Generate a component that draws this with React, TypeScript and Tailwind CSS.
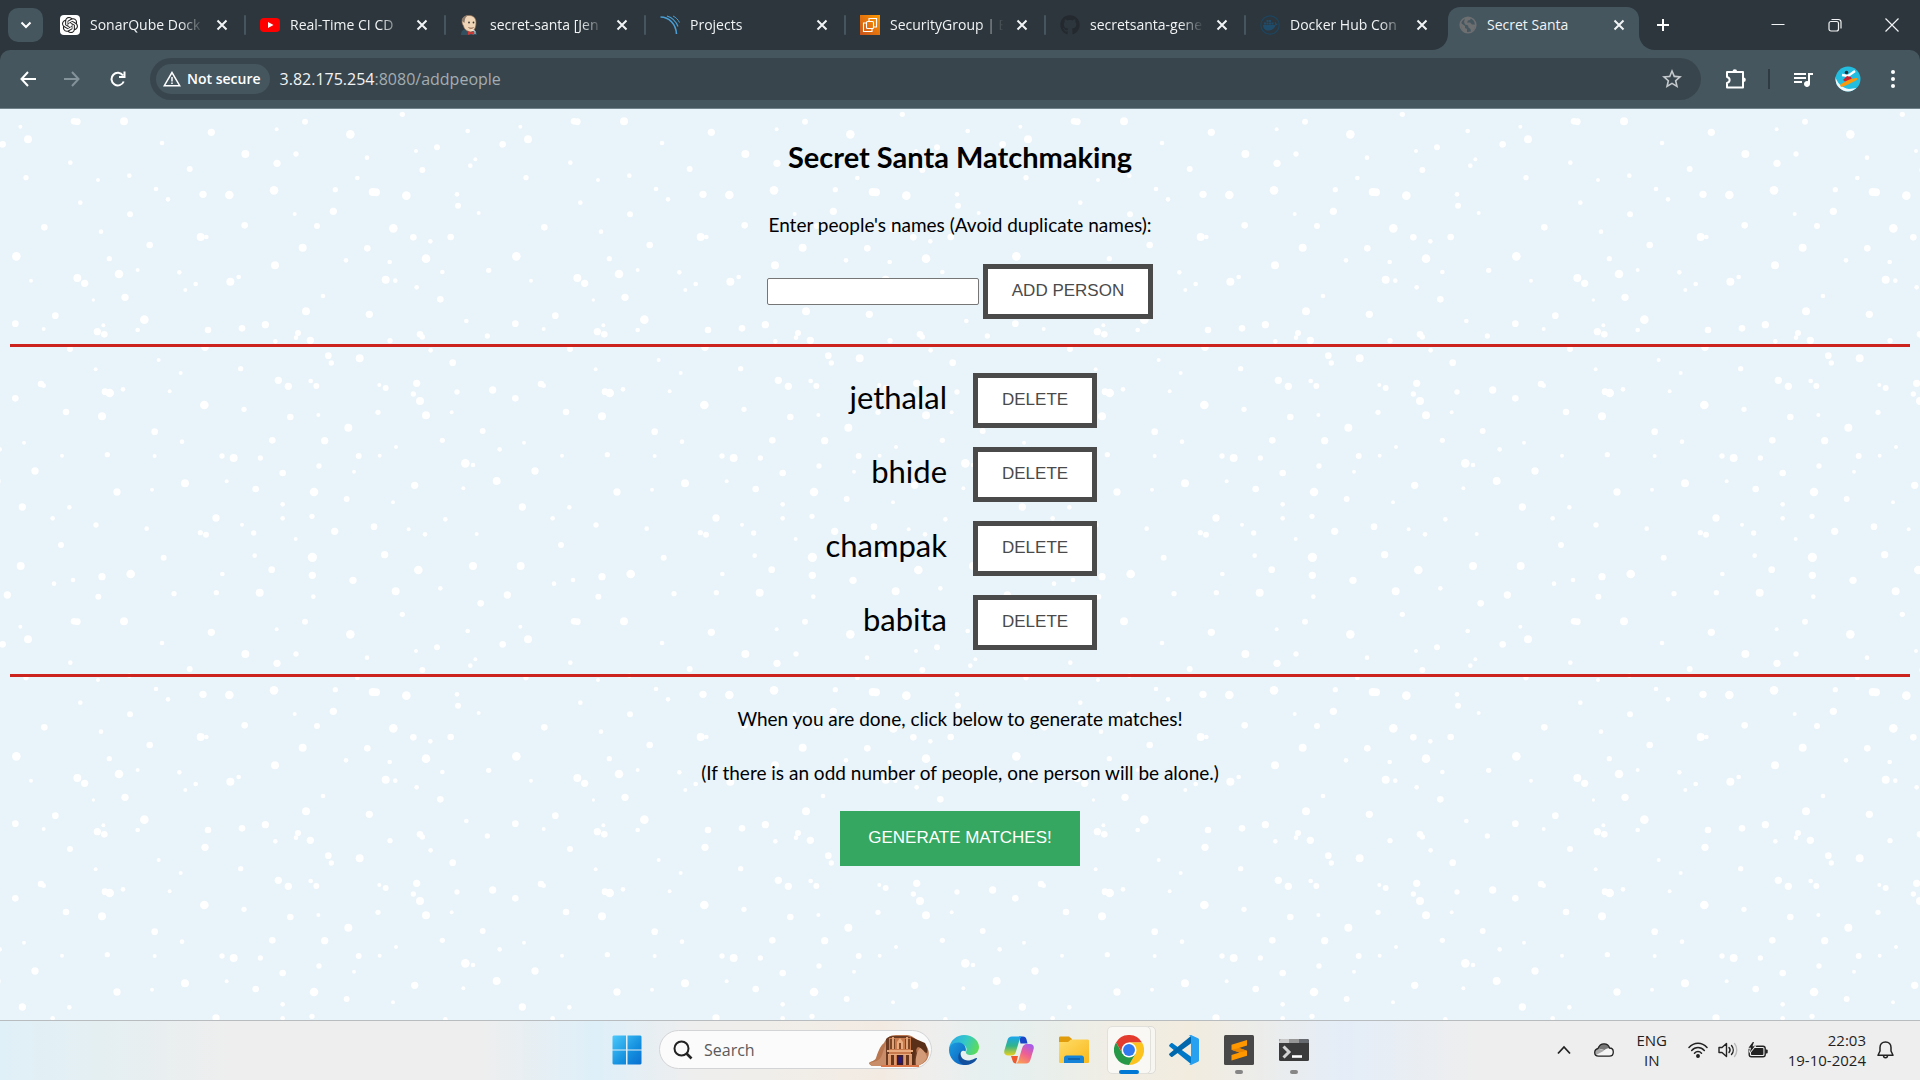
import React from "react";
import { SiOpenai } from "react-icons/si";
import { FaGithub } from "react-icons/fa";
import { MdQueueMusic, MdStarBorder } from "react-icons/md";

/* ---------- snow background ---------- */

// x, y, radius inside a 1500 x 1500 tile
const FLAKES: number[][] = [
  [222, 64, 10], [232, 65, 10], [372, 64, 12], [61, 80, 6], [84, 118, 12], [8, 133, 10], [1508, 133, 10],
  [211, 188, 7], [78, 233, 8], [294, 240, 6], [388, 227, 7], [486, 129, 7], [634, 97, 11], [569, 207, 9],
  [468, 267, 7], [504, 298, 7], [241, 308, 7], [390, 343, 9], [609, 283, 11], [688, 285, 13], [736, 162, 12],
  [831, 190, 11], [822, 271, 13], [888, 162, 8], [830, 88, 6], [915, 65, 9], [1051, 103, 13], [1207, 43, 8],
  [1403, 93, 7], [1248, 153, 6], [1311, 142, 9], [1101, 173, 7], [1426, 178, 6], [1411, 197, 7], [1267, 210, 9],
  [1072, 234, 7], [1006, 269, 8], [1118, 276, 12], [1128, 277, 12], [1219, 287, 13], [1371, 283, 7],
  [1374, 317, 9], [1436, 339, 6], [1000, 334, 11], [884, 342, 6], [951, 378, 9], [734, 376, 10], [1180, 385, 13],
  [1240, 412, 10], [1352, 411, 10], [1291, 424, 7], [133, 382, 10], [303, 395, 7], [602, 411, 12], [619, 411, 7],
  [449, 435, 10], [49, 469, 13], [328, 476, 8], [357, 522, 13], [413, 510, 6], [538, 517, 7], [587, 552, 7],
  [556, 570, 6], [691, 545, 12], [716, 531, 7], [825, 496, 12], [908, 443, 12], [1102, 445, 10], [1038, 481, 7],
  [1169, 486, 7], [1278, 476, 13], [1327, 516, 7], [1466, 511, 8], [1157, 539, 12], [1186, 542, 7],
  [1250, 562, 7], [1321, 598, 10], [93, 542, 6], [232, 534, 12], [254, 550, 11], [375, 592, 11], [280, 600, 5],
  [166, 647, 10], [46, 671, 10], [131, 687, 6], [310, 676, 6], [292, 695, 11], [313, 703, 10], [433, 659, 13],
  [413, 690, 7], [624, 690, 10], [726, 685, 10], [796, 674, 11], [918, 634, 12], [969, 588, 7], [894, 699, 9],
  [888, 713, 7], [931, 721, 11], [826, 724, 7], [1108, 643, 11], [1170, 722, 8], [1260, 703, 10], [1267, 711, 8],
  [1399, 663, 7], [1462, 708, 8], [210, 747, 9], [615, 742, 11], [476, 780, 6], [287, 808, 6], [542, 819, 6],
  [722, 806, 8], [985, 767, 10], [994, 789, 8], [1079, 775, 12], [1292, 751, 7], [1358, 788, 10], [123, 852, 10],
  [131, 857, 7], [46, 895, 10], [315, 875, 10], [329, 879, 13], [369, 868, 7], [509, 874, 6], [835, 841, 11],
  [865, 859, 11], [932, 843, 7], [949, 858, 9], [1138, 855, 6], [1157, 864, 9], [1250, 850, 11], [1240, 882, 8],
  [1260, 903, 12], [1371, 876, 8], [1478, 870, 11], [1278, 946, 12], [1355, 937, 6], [1134, 937, 8],
  [955, 945, 6], [871, 951, 10], [732, 928, 8], [613, 915, 13], [306, 949, 12], [198, 936, 10], [464, 995, 10],
  [546, 1025, 7], [72, 1028, 6], [1045, 983, 12], [817, 1021, 10], [974, 1022, 11], [1188, 1041, 6],
  [1327, 1021, 8], [1448, 993, 9], [-1, 1048, 7], [1499, 1048, 7], [186, 1067, 6], [322, 1064, 8], [464, 1068, 6],
  [666, 1068, 8], [701, 1074, 12], [781, 1074, 8], [848, 1119, 10], [957, 1098, 8], [1076, 1068, 9],
  [1139, 1067, 6], [1062, 1115, 6], [1396, 1090, 13], [1419, 1095, 7], [-10, 1143, 12], [1490, 1143, 12],
  [1390, 1165, 6], [1244, 1156, 11], [105, 1113, 11], [351, 1176, 11], [456, 1169, 6], [555, 1150, 12],
  [680, 1144, 6], [767, 1167, 10], [942, 1176, 13], [1040, 1197, 9], [1179, 1207, 6], [67, 1221, 11],
  [208, 1222, 7], [158, 1255, 7], [288, 1275, 8], [440, 1286, 7], [648, 1254, 11], [601, 1298, 8],
  [618, 1304, 9], [726, 1274, 6], [761, 1299, 8], [848, 1213, 7], [848, 1255, 7], [936, 1249, 8], [887, 1317, 6],
  [1004, 1294, 11], [1122, 1280, 10], [1226, 1288, 6], [1275, 1303, 7], [1336, 1258, 7], [1430, 1302, 6],
  [183, 1335, 9], [62, 1398, 12], [491, 1373, 9], [306, 1430, 11], [392, 1422, 13], [219, 1440, 7],
  [162, 1451, 7], [22, 1485, 11], [1522, 1485, 11], [295, 1490, 9], [522, 1481, 8], [649, 1478, 8], [667, 1422, 7],
  [764, 1367, 7], [815, 1409, 10], [779, 1478, 12], [937, 1372, 14], [937, 1426, 11], [940, 1490, 7],
  [1059, 1441, 11], [1154, 1364, 11], [1255, 1410, 13], [1187, 1474, 12], [1321, 1465, 7], [1419, 1398, 12],
  [1442, 10, 10],
];

function Snow() {
  return (
    <svg className="absolute inset-0 h-full w-full" aria-hidden="true">
      <defs>
        <pattern id="snow" x="0" y="-9" width="500" height="500" patternUnits="userSpaceOnUse" viewBox="0 0 1500 1500">
          {FLAKES.map(([x, y, r], i) => (
            <circle key={i} cx={x} cy={y} r={r} fill="#ffffff" />
          ))}
        </pattern>
      </defs>
      <rect width="100%" height="100%" fill="url(#snow)" />
    </svg>
  );
}

/* ---------- tab strip ---------- */

const JenkinsIcon = () => (
  <svg viewBox="0 0 20 20" className="h-5 w-5">
    <path d="M1 20c0-3 1-5 4-6l7 1c3 0 5 2 5 5z" fill="#335061" />
    <path d="M2 6C2 2 6 0 10 0.500c4 0.500 6 3 6 7 0 4-1 8-5 9.500-4-0.500-7-3-7.500-6C2.500 9.500 2 8 2 6z" fill="#f0d6b7" stroke="#8c6c52" strokeWidth="0.700" />
    <path d="M2 6C2 2 5 0.500 8 0.500 4.500 2.500 5 5 4.500 8z" fill="#8a7a6c" />
    <circle cx="9" cy="7.500" r="0.900" fill="#333" />
    <circle cx="13.500" cy="7.500" r="0.900" fill="#333" />
    <path d="M8.500 12.500c1.500 1 3.500 1 5 0" stroke="#6b3c2a" strokeWidth="0.800" fill="none" />
    <path d="M8 16l3 1.500L14 16v4l-3-1.200L8 20z" fill="#d33833" />
    <path d="M11.500 15l3.500 1v3" fill="none" stroke="#fff" strokeWidth="0.800" />
  </svg>
);

const SonarIcon = () => (
  <svg viewBox="0 0 20 20" className="h-5 w-5" fill="none" stroke="#4b9fd5">
    <path d="M0.500 2C9 2 16 9 16.500 19" strokeWidth="1.600" />
    <path d="M7 1c5 1.500 9 5.500 11 10.500" strokeWidth="1.200" />
    <path d="M13 1c3 1.500 5 3.500 6.500 6.500" strokeWidth="1" />
  </svg>
);

const Ec2Icon = () => (
  <svg viewBox="0 0 20 20" className="h-5 w-5">
    <defs>
      <linearGradient id="ec2" x1="0" y1="1" x2="1" y2="0">
        <stop offset="0" stopColor="#c8511b" />
        <stop offset="1" stopColor="#ff9900" />
      </linearGradient>
    </defs>
    <rect width="20" height="20" fill="url(#ec2)" />
    <g fill="none" stroke="#fff" strokeWidth="1.100">
      <path d="M6 8H3.500v8.500H12V14" />
      <rect x="6.500" y="6.500" width="7" height="7" rx="1" />
      <path d="M9 6V3.500h7.500V12H14" />
    </g>
  </svg>
);

const YoutubeIcon = () => (
  <svg viewBox="0 0 20 20" className="h-5 w-5">
    <rect x="0" y="3" width="20" height="14" rx="4" fill="#ff0000" />
    <path d="M8 7l5.500 3L8 13z" fill="#fff" />
  </svg>
);

const DockerIcon = () => (
  <svg viewBox="0 0 20 20" className="h-5 w-5">
    <circle cx="10" cy="10" r="9.200" fill="none" stroke="#1d4560" strokeWidth="1.200" />
    <path d="M3 10h12c0.500-1 0-2-0.500-2.500l0.800-0.500c0.700 0.500 1 1.200 1 1.800 0.500-0.200 1.200-0.100 1.500 0.200-0.400 1-1.300 1.300-2.300 1.300C14.500 14 12 15.500 8.500 15.500 5 15.500 3 13.500 3 10z" fill="#1f4c6b" />
    <path d="M4 7.500h2v2H4zM6.500 7.500h2v2h-2zM9 7.500h2v2H9zM11.500 7.500h2v2h-2zM6.500 5h2v2h-2zM9 5h2v2H9z" fill="#1f4c6b" />
  </svg>
);

const GlobeIcon = () => (
  <svg viewBox="0 0 18 18" className="h-[18px] w-[18px]">
    <circle cx="9" cy="9" r="7.800" fill="none" stroke="#6d6f71" strokeWidth="1.600" />
    <path d="M2 7l4 3v2l2 1v3.500C4 16 1.500 13 2 7zM6 2c1 0 4-1 6 0l-1 2-2 0.500-1 2h3l2 2h3c0.500 3-1 6-4 7.500l-0.500-3-2-1.500-0.500-2-3-1L5 6z" fill="#6d6f71" />
  </svg>
);

const Cross = () => (
  <svg viewBox="0 0 16 16" className="h-4 w-4" stroke="#f1f3f4" strokeWidth="2">
    <path d="M3.500 3.500l9 9M12.500 3.500l-9 9" />
  </svg>
);

const TABS = [
  { title: "SonarQube Dock", icon: <span className="flex h-5 w-5 items-center justify-center rounded bg-white"><SiOpenai size={16} color="#222" /></span> },
  { title: "Real-Time CI CD", icon: <YoutubeIcon /> },
  { title: "secret-santa [Jen", icon: <JenkinsIcon /> },
  { title: "Projects", icon: <SonarIcon /> },
  { title: "SecurityGroup | E", icon: <Ec2Icon /> },
  { title: "secretsanta-gene", icon: <FaGithub size={20} color="#24292f" /> },
  { title: "Docker Hub Con", icon: <DockerIcon /> },
];

function TabStrip() {
  return (
    <div className="flex h-[50px] bg-[#2c363c] pl-2">
      <button aria-label="Search tabs" className="mt-2 mr-[3px] flex h-[34px] w-[35px] shrink-0 items-center justify-center rounded-[10px] bg-[#45565f]">
        <svg viewBox="0 0 12 12" className="h-3 w-3" fill="none" stroke="#fff" strokeWidth="2">
          <path d="M1.500 3.500L6 8l4.500-4.500" />
        </svg>
      </button>
      {TABS.map((tab, i) => (
        <div key={tab.title} className="flex w-[200px] min-w-0 items-center pl-[14px]">
          <button className="flex min-w-0 flex-1 items-center gap-[10px] text-left">
            <span className="shrink-0">{tab.icon}</span>
            <span className="w-[116px] overflow-hidden text-[14px] leading-5 whitespace-nowrap text-[#f1f3f4] [mask-image:linear-gradient(to_right,black_78%,transparent_98%)]">
              {tab.title}
            </span>
          </button>
          <button aria-label={"Close " + tab.title} className="mr-[14px] shrink-0"><Cross /></button>
          <span className={i < 6 ? "h-5 w-[2px] shrink-0 rounded bg-[#45565f]" : "h-5 w-[2px] shrink-0"} />
        </div>
      ))}
      <div className="relative mt-[7px] ml-[2px] flex w-[191px] min-w-0 items-center rounded-t-[12px] bg-[#45565f] pb-[7px] pl-[11px]">
        <svg viewBox="0 0 16 16" className="absolute bottom-0 -left-4 h-4 w-4" fill="#45565f"><path d="M16 0v16H0C9 16 16 9 16 0z" /></svg>
        <svg viewBox="0 0 16 16" className="absolute -right-4 bottom-0 h-4 w-4" fill="#45565f"><path d="M0 0v16h16C7 16 0 9 0 0z" /></svg>
        <button className="flex min-w-0 flex-1 items-center gap-[10px] text-left">
          <GlobeIcon />
          <span className="text-[14px] leading-5 whitespace-nowrap text-[#f1f3f4]">Secret Santa</span>
        </button>
        <button aria-label="Close Secret Santa" className="mr-3 shrink-0"><Cross /></button>
      </div>
      <button aria-label="New tab" className="ml-4 shrink-0">
        <svg viewBox="0 0 16 16" className="h-4 w-4" stroke="#fff" strokeWidth="2"><path d="M8 2v12M2 8h12" /></svg>
      </button>
      <div className="ml-auto flex shrink-0 text-[#f1f3f4]">
        <button aria-label="Minimise" className="flex w-[57px] items-center justify-center">
          <svg viewBox="0 0 14 14" className="h-[14px] w-[14px]" stroke="currentColor"><path d="M0.500 6.500h13" /></svg>
        </button>
        <button aria-label="Restore" className="flex w-[57px] items-center justify-center">
          <svg viewBox="0 0 14 14" className="h-[14px] w-[14px]" fill="none" stroke="currentColor" strokeWidth="1.200">
            <rect x="1" y="3.500" width="9.500" height="9.500" rx="2" />
            <path d="M3.500 1.500h7a2.500 2.500 0 0 1 2.500 2.500v6.500" />
          </svg>
        </button>
        <button aria-label="Close window" className="flex w-[57px] items-center justify-center">
          <svg viewBox="0 0 14 14" className="h-[14px] w-[14px]" stroke="currentColor" strokeWidth="1.200"><path d="M0.500 0.500l13 13M13.500 0.500l-13 13" /></svg>
        </button>
      </div>
    </div>
  );
}

/* ---------- toolbar ---------- */

function Toolbar() {
  return (
    <div className="bg-[#2c363c]">
      <div className="flex h-[59px] items-center rounded-t-[10px] border-b border-[#71828a] bg-[#45565f] pl-5 text-white">
        <button aria-label="Back" className="mr-7">
          <svg viewBox="0 0 16 16" className="h-4 w-4" fill="none" stroke="#fff" strokeWidth="2"><path d="M8 1L1.500 8 8 15M1.500 8H16" /></svg>
        </button>
        <button aria-label="Forward" className="mr-[30px]">
          <svg viewBox="0 0 16 16" className="h-4 w-4" fill="none" stroke="#849299" strokeWidth="2"><path d="M8 1l6.500 7L8 15M14.500 8H0" /></svg>
        </button>
        <button aria-label="Reload" className="mr-6">
          <svg viewBox="0 0 16 16" className="h-4 w-4" fill="none" stroke="#fff" strokeWidth="2"><path d="M13.700 10.500A6.300 6.300 0 1 1 13 4.500M14.500 0.500V6H9" /></svg>
        </button>
        <div className="flex h-[42px] min-w-0 flex-1 items-center rounded-full bg-[#39454c] px-[6px]">
          <button className="flex h-[30px] shrink-0 items-center gap-[6px] rounded-full bg-[#45565f] px-[7px]">
            <svg viewBox="0 0 18 16" className="h-4 w-[18px]" fill="none" stroke="#fff" strokeWidth="1.500">
              <path d="M9 1.500L1.300 14.700h15.400z" />
              <path d="M9 6v4.500M9 11.500v1.500" />
            </svg>
            <span className="pr-[2px] text-[14px] leading-5 font-semibold">Not secure</span>
          </button>
          <div className="relative ml-[10px] min-w-0 flex-1 text-[16px] leading-6">
            <input aria-label="Address" className="absolute inset-0 w-full bg-transparent outline-none" />
            <span className="text-[#f1f3f4]">3.82.175.254</span>
            <span className="text-[#a3adb2]">:8080/addpeople</span>
          </div>
          <button aria-label="Bookmark" className="mr-[11px] shrink-0"><MdStarBorder size={24} color="#c3c9cc" /></button>
        </div>
        <button aria-label="Extensions" className="ml-6 shrink-0">
          <svg viewBox="0 0 22 22" className="h-[22px] w-[22px]" fill="none" stroke="#fff" strokeWidth="2">
            <path d="M2 4h16v15.500H2v-4.500c3.500-1 3.500-5 0-6z" strokeLinejoin="round" />
            <path d="M7.500 3.500a2.300 2.300 0 0 1 4.600 0zM18.500 9.500a2.300 2.300 0 0 1 0 4.600z" fill="#fff" stroke="none" />
          </svg>
        </button>
        <span className="ml-[21px] h-5 w-[2px] shrink-0 bg-[#2f3b41]" />
        <button aria-label="Media" className="ml-[21px] shrink-0"><MdQueueMusic size={24} color="#fff" /></button>
        <button aria-label="Profile" className="ml-5 shrink-0">
          <svg viewBox="0 0 26 26" className="h-[26px] w-[26px]">
            <defs><clipPath id="avatar"><circle cx="13" cy="13" r="12.500" /></clipPath></defs>
            <g clipPath="url(#avatar)">
              <rect width="26" height="26" fill="#23bde0" />
              <path d="M0 10c2 7 7 12 14 13l8-1-6 4H0z" fill="#eef6f8" />
              <path d="M7 9l6 1 7-5" stroke="#fff" strokeWidth="2.400" fill="none" />
              <path d="M8 14l4-4 4 1 1 3-5 3z" fill="#c8202f" />
              <path d="M5 19c4-3 10-7 17-7 1 1 0 2-2 3-5 2-9 5-14 6z" fill="#f89a0c" />
              <circle cx="11.500" cy="6.500" r="1.800" fill="#263238" />
            </g>
          </svg>
        </button>
        <button aria-label="Menu" className="mr-[17px] ml-[22px] shrink-0">
          <svg viewBox="0 0 20 20" className="h-5 w-5" fill="#fff">
            <circle cx="10" cy="3" r="2" /><circle cx="10" cy="10" r="2" /><circle cx="10" cy="17" r="2" />
          </svg>
        </button>
      </div>
    </div>
  );
}

/* ---------- page ---------- */

const PEOPLE = ["jethalal", "bhide", "champak", "babita"];

function Page() {
  const outlined = "h-[55px] border-[5px] border-[#4a4a4a] bg-white px-6 pb-[2px] font-['Liberation_Sans',sans-serif] text-[17px] leading-5 text-[#4a4a4a]";
  return (
    <main className="relative flex-1 bg-[#e8f3fa] px-[10px] font-['Lato',sans-serif] text-black">
      <Snow />
      <div className="relative text-center">
        <h1 className="pt-[30px] text-[29px] leading-9 font-bold">Secret Santa Matchmaking</h1>
        <p className="mt-[36px] text-[19px] leading-7"><label htmlFor="person">Enter people's names (Avoid duplicate names):</label></p>
        <div className="mt-[25px] flex items-center justify-center gap-1">
          <input id="person" type="text" className="h-[27px] w-[212px] rounded-[2px] border border-[#767676] bg-white px-1" />
          <button className={outlined}>ADD PERSON</button>
        </div>
        <hr className="mt-[25px] border-t-[3px] border-[#cc231e]" />
        <ul className="mt-[26px] flex flex-col gap-[19px]">
          {PEOPLE.map((name) => (
            <li key={name} className="grid grid-cols-2 items-center gap-[26px]">
              <span className="pb-[7px] text-right text-[31px] leading-9">{name}</span>
              <button className={outlined + " justify-self-start"}>DELETE</button>
            </li>
          ))}
        </ul>
        <hr className="mt-6 border-t-[3px] border-[#cc231e]" />
        <p className="mt-[28px] text-[19px] leading-7">When you are done, click below to generate matches!</p>
        <p className="mt-[26px] text-[19px] leading-7">(If there is an odd number of people, one person will be alone.)</p>
        <button className="mt-[24px] mb-5 h-[55px] bg-[#35a760] px-7 pb-[2px] font-['Liberation_Sans',sans-serif] text-[17px] leading-5 text-white">
          GENERATE MATCHES!
        </button>
      </div>
    </main>
  );
}

/* ---------- taskbar ---------- */

const WindowsIcon = () => (
  <svg viewBox="0 0 30 30" className="h-[30px] w-[30px]">
    <defs>
      <linearGradient id="win" x1="0" y1="0" x2="1" y2="1">
        <stop offset="0" stopColor="#4cc9fb" /><stop offset="0.600" stopColor="#1490df" /><stop offset="1" stopColor="#0a6fd0" />
      </linearGradient>
    </defs>
    <path d="M1.500 0.500H14v14H0.500v-13zM15.500 0.500h13l1 1v13h-14zM0.500 15.500H14v14H1.500l-1-1zM15.500 15.500h14v13l-1 1h-13z" fill="url(#win)" />
  </svg>
);

const PetraIcon = () => (
  <svg viewBox="0 0 60 34" className="h-[34px] w-[60px]">
    <path d="M0 30c2-2 6-2 7-5 2-6 4-12 8-15 2-5 6-8 12-8h11c5 0 9 4 12 7l8 5c3 5 2 10-1 14-4 4-8 5-13 5H3c-2-1-3-2-3-3z" fill="#b87750" />
    <path d="M17 6c2-2 4-3 7-3h14c4 1 7 4 8 7l4 22H17z" fill="#6a3a22" />
    <path d="M20 5h22v28H20z" fill="#c97a4c" />
    <path d="M42 4l14 6c2 4 3 7 2 10-4-1-6-6-9-6-3 2-3 9-4 18h-3z" fill="#5b3018" />
    <path d="M0 30c5-1 11-2 13-8l4-12v23H3z" fill="#c98e69" />
    <path d="M47 33c-1-6 0-13 4-18 3 1 6 6 7 9-2 5-6 8-11 9z" fill="#d49b78" />
    <path d="M21 6h5v10h-5zM36 6h5v10h-5z" fill="#7c4526" />
    <path d="M23 4h2v12h-2zM37 4h2v12h-2z" fill="#e0a277" />
    <path d="M31 5l3 4v7h-6V9z" fill="#e8ac80" /><path d="M30 10h2v6h-2z" fill="#8a4a28" />
    <path d="M18 17h26v2H18zM19 21h24v1H19z" fill="#e8ac80" />
    <path d="M19 22h3v10h-3zM25 22h2v10h-2zM35 22h2v10h-2zM40 22h3v10h-3z" fill="#dd9a6e" />
    <path d="M22 22h3v10h-3zM37 22h3v10h-3z" fill="#6b381e" />
    <path d="M28 22h6v10h-6z" fill="#3b1b30" /><path d="M29.500 24h3v6h-3z" fill="#27187a" />
    <path d="M12 32h38v2H12z" fill="#d9774a" />
  </svg>
);

const EdgeIcon = () => (
  <svg viewBox="0 0 30 30" className="h-[30px] w-[30px]">
    <defs>
      <linearGradient id="edgeTop" x1="0" y1="0.300" x2="1" y2="0.600">
        <stop offset="0" stopColor="#2aa9e8" /><stop offset="0.500" stopColor="#34c8c8" /><stop offset="1" stopColor="#5fdc55" />
      </linearGradient>
      <linearGradient id="edgeLow" x1="0" y1="0" x2="1" y2="1">
        <stop offset="0" stopColor="#1b9de0" /><stop offset="1" stopColor="#0b5cbd" />
      </linearGradient>
    </defs>
    <path d="M0 14C1 5 8 0 15 0c9 0 15 6 15 12 0 5-4 8-8 8-4 0-5.500-1.500-5-3 2-4-1-8-6-8-5 0-9 2-11 5z" fill="url(#edgeTop)" />
    <path d="M0 15C0 10 5 7 10 7.500c5 0.500 8 5 6.500 9C13 14 9 19 11 24c1 3 4 5 7 5.500C7 32 0 23 0 15z" fill="url(#edgeLow)" />
    <path d="M12 16c-2 7 4 11 10 9 3-1 5-2.500 6-2 0.500 1-4 7-11 7C11 30 6 22 12 16z" fill="#124f9c" />
  </svg>
);

const CopilotIcon = () => (
  <svg viewBox="0 0 30 28" className="h-7 w-[30px]">
    <defs>
      <linearGradient id="copA" x1="0" y1="0" x2="0" y2="1">
        <stop offset="0" stopColor="#1aa5ee" /><stop offset="0.500" stopColor="#31b48a" /><stop offset="1" stopColor="#ead11c" />
      </linearGradient>
      <linearGradient id="copB" x1="0.800" y1="0" x2="0.300" y2="1">
        <stop offset="0" stopColor="#a25cf0" /><stop offset="0.500" stopColor="#ee5f94" /><stop offset="1" stopColor="#fb9a55" />
      </linearGradient>
    </defs>
    <path d="M15 0.500h4c2 0 3 1 3.500 3l1 4h-7z" fill="#1746c8" />
    <path d="M7 20h7l-2 7.500c-2 0-3-1-3.500-3z" fill="#f0592b" />
    <path d="M8 0.500h10c-2 1-2.500 3-3 5l-3 10c-1 3-2 4-5 4H4c-3 0-4.500-2-3.500-5.500l3-10C4 2 5.500 0.500 8 0.500z" fill="url(#copA)" />
    <path d="M22 27.500H12c2-1 2.500-3 3-5l3-10c1-3 2-4.500 5-4.500h3c3 0 4.500 2 3.500 5.500l-3 10c-0.700 2.500-2 4-4.500 4z" fill="url(#copB)" />
  </svg>
);

const FolderIcon = () => (
  <svg viewBox="0 0 30 28" className="h-7 w-[30px]">
    <defs>
      <linearGradient id="fold" x1="0" y1="0" x2="1" y2="1">
        <stop offset="0" stopColor="#ffdc68" /><stop offset="1" stopColor="#f9b91c" />
      </linearGradient>
    </defs>
    <path d="M0 2c0-1 0.600-1.500 1.500-1.500H10L13 3v4H0z" fill="#e09c0b" />
    <path d="M0 6h9l3-2.500h16.500c1 0 1.500 0.500 1.500 1.500v20.500c0 1-0.500 1.500-1.500 1.500h-27C0.500 27 0 26.500 0 25.500z" fill="url(#fold)" />
    <path d="M5 27v-5c0-1.500 1-2.500 2.500-2.500h15c1.500 0 2.500 1 2.500 2.500v5z" fill="#1583d8" />
    <path d="M9 23h12" stroke="#0b4f93" strokeWidth="1.200" />
  </svg>
);

const ChromeIcon = () => (
  <svg viewBox="0 0 48 48" className="h-[30px] w-[30px]">
    <path d="M24 12h20.800A24 24 0 0 0 3.200 12l10.400 18z" fill="#e33b2e" />
    <path d="M34.400 30L24 48A24 24 0 0 0 44.800 12H24z" fill="#fcc31e" />
    <path d="M13.600 30L3.200 12A24 24 0 0 0 24 48l10.400-18z" fill="#279847" />
    <circle cx="24" cy="24" r="12" fill="#fff" />
    <circle cx="24" cy="24" r="9.500" fill="#3079ee" />
  </svg>
);

const CodeIcon = () => (
  <svg viewBox="0 0 30 30" className="h-[30px] w-[30px]">
    <path d="M0.500 11.500c-0.600-0.600-0.600-1.200 0-1.800l1.500-1.400c0.500-0.400 1-0.400 1.500 0L22.500 22v7.500z" fill="#0078c8" />
    <path d="M0.500 18.500c-0.600 0.600-0.600 1.200 0 1.800l1.500 1.400c0.500 0.400 1 0.400 1.500 0L22.500 8V0.500z" fill="#0067ad" />
    <path d="M22.500 0.200l6.500 3c0.600 0.300 1 0.800 1 1.500v20.600c0 0.700-0.400 1.200-1 1.500l-6.500 3c-1 0.300-2-0.200-2.800-1 1 0.700 2.300 0 2.300-1.300V2.500c0-1.300-1.300-2-2.300-1.300 0.800-0.800 1.800-1.300 2.800-1z" fill="#27a1f0" />
  </svg>
);

const SublimeIcon = () => (
  <svg viewBox="0 0 30 30" className="h-[30px] w-[30px]">
    <rect width="30" height="30" rx="1.500" fill="#484848" />
    <path d="M23 5v5.500l-8 2.600 8 2.600v5L7.500 25.500V20l8-2.600-8-2.600v-5z" fill="#ff9800" />
    <path d="M7.500 14.800l8 2.600 7.500-1.700-8-2.600z" fill="#e88400" />
  </svg>
);

const TerminalIcon = () => (
  <svg viewBox="0 0 30 22" className="h-[22px] w-[30px]">
    <rect width="30" height="22" rx="1.500" fill="#3b3b3b" />
    <path d="M1.500 0H10v4H0V1.500z" fill="#c9c9c9" /><path d="M10 0h10v4H10z" fill="#969696" /><path d="M20 0h8.500L30 1.500V4H20z" fill="#676b70" />
    <path d="M4.500 7.500l5.500 5.500-5.500 5.500" stroke="#d4d4d4" strokeWidth="3" fill="none" />
    <path d="M13 17.500h10" stroke="#fff" strokeWidth="2.600" />
  </svg>
);

const APPS = [
  { name: "Edge", icon: <EdgeIcon />, mark: "" },
  { name: "Copilot", icon: <CopilotIcon />, mark: "" },
  { name: "File Explorer", icon: <FolderIcon />, mark: "" },
  { name: "Chrome", icon: <ChromeIcon />, mark: "active" },
  { name: "Visual Studio Code", icon: <CodeIcon />, mark: "" },
  { name: "Sublime Text", icon: <SublimeIcon />, mark: "open" },
  { name: "Terminal", icon: <TerminalIcon />, mark: "open" },
];

function Taskbar() {
  return (
    <footer className="grid h-[60px] grid-cols-[1fr_auto_1fr] items-center border-t border-[#b9bcbe] bg-[linear-gradient(to_right,#e0f0f8_0%,#e4eff2_5%,#eeeeee_12%,#eeeeee_25%,#deeff9_31%,#eeeeee_36%,#f0eeea_40%,#f3ebe2_46%,#f0eeec_48%,#e4f0f1_52%,#f0ede4_58%,#f2ecdf_62%,#e4edf8_70%,#eeeeee_77%,#eeeeee_100%)] pb-[2px] text-[#1f1f1f]">
      <div />
      <div className="flex items-center pl-[13px]">
        <button aria-label="Start" className="mr-[17px]"><WindowsIcon /></button>
        <div className="mr-1 flex h-[39px] w-[273px] items-center rounded-full border border-[#d3d4d5] bg-[#fbfbfb] pr-[2px] pl-[13px]">
          <svg viewBox="0 0 20 20" className="h-5 w-5" fill="none" stroke="#222" strokeWidth="2">
            <circle cx="8.500" cy="8.500" r="7" /><path d="M13.500 13.500l5 5" strokeWidth="2.600" />
          </svg>
          <input aria-label="Search" placeholder="Search" className="ml-[11px] w-0 min-w-0 flex-1 bg-transparent text-[16px] leading-6 outline-none placeholder:text-[#5a5a5a]" />
          <PetraIcon />
        </div>
        {APPS.map((app) => (
          <button
            key={app.name}
            aria-label={app.name}
            className="relative flex h-12 w-[55px] items-center justify-center"
          >
            {app.mark === "active" && (
              <>
                <span className="absolute inset-y-0 right-0 w-3 rounded-[5px] border border-[#dedcd6] bg-[#f8f6f1]" />
                <span className="absolute inset-y-0 right-[5px] left-[6px] rounded-[5px] border border-[#e2e0da] bg-[#faf8f4]" />
                <span className="absolute bottom-0 left-[18px] h-1 w-5 rounded-full bg-[#0078d4]" />
              </>
            )}
            {app.mark === "open" && <span className="absolute bottom-0 left-6 h-1 w-2 rounded-full bg-[#868686]" />}
            <span className="relative">{app.icon}</span>
          </button>
        ))}
      </div>
      <div className="flex items-center justify-end pr-[26px]">
        <button aria-label="Hidden icons">
          <svg viewBox="0 0 14 10" className="h-[10px] w-[14px]" fill="none" stroke="#222" strokeWidth="1.800"><path d="M1 8.500l6-6.500 6 6.500" /></svg>
        </button>
        <button aria-label="OneDrive" className="ml-[23px]">
          <svg viewBox="0 0 20 14" className="h-[14px] w-5">
            <path d="M4.500 13.200C2.500 13.200 0.700 12 0.700 9.500 0.700 7.500 2 6 4 5.500 5 2.500 7 0.800 10 0.800c3 0 5 1.700 5.500 4.200 2.300 0 3.800 1.700 3.800 4 0 2.500-1.700 4.200-4 4.200z" fill="#f5f5f5" />
            <path d="M4 5.500C5 2.500 7 0.800 10 0.800c3 0 5 1.700 5.500 4.200-2 0-4 1-5 2z" fill="#777" />
            <path d="M4 5.500l6.500 2L2 12C0 10 0.500 6.500 4 5.500z" fill="#a9a9a9" />
            <path d="M4.500 13.200C2.500 13.200 0.700 12 0.700 9.500 0.700 7.500 2 6 4 5.500 5 2.500 7 0.800 10 0.800c3 0 5 1.700 5.500 4.200 2.300 0 3.800 1.700 3.800 4 0 2.500-1.700 4.200-4 4.200z" fill="none" stroke="#222" strokeWidth="1.300" />
          </svg>
        </button>
        <button className="ml-[22px] w-[32px] text-center text-[15px] leading-5">ENG<br />IN</button>
        <button aria-label="Network, sound and battery" className="ml-5 flex items-center gap-[10px]">
          <svg viewBox="0 0 20 16" className="h-4 w-5" fill="none" stroke="#222" strokeWidth="1.500" strokeLinecap="round">
            <path d="M1 5.500C6-0.200 14-0.200 19 5.500M3.700 8.500c3.500-4 9.100-4 12.600 0M6.500 11.200c2-2.200 5-2.200 7 0" />
            <circle cx="10" cy="14" r="1.200" fill="#222" />
          </svg>
          <svg viewBox="0 0 20 16" className="h-4 w-5" fill="none" stroke="#222" strokeWidth="1.400" strokeLinecap="round" strokeLinejoin="round">
            <path d="M1 5.500h3L8.500 1.500v13L4 10.500H1z" />
            <path d="M11 5.500c1.300 1.500 1.300 3.500 0 5M13.500 3.500c2.300 2.600 2.300 6.400 0 9" />
            <path d="M16.500 1.500c3 3.500 3 9.500 0 13" stroke="#bbb" />
          </svg>
          <svg viewBox="0 0 20 16" className="h-4 w-5">
            <rect x="1.200" y="4.200" width="16" height="10.600" rx="2.200" fill="none" stroke="#222" strokeWidth="1.400" />
            <rect x="3" y="6" width="12.400" height="7" rx="0.800" fill="#222" />
            <path d="M17.500 7.500h1.200a1 1 0 0 1 1 1v2a1 1 0 0 1-1 1h-1.200z" fill="#222" />
            <path d="M4.800 0L0.500 5.800H3L1.800 10.500 6.800 4.300H4.500L6 0z" fill="#222" stroke="#eee" strokeWidth="1.800" paintOrder="stroke" />
          </svg>
        </button>
        <button className="ml-[20px] text-right text-[15px] leading-5 whitespace-nowrap">22:03<br />19-10-2024</button>
        <button aria-label="Notifications" className="ml-[11px]">
          <svg viewBox="0 0 17 18" className="h-[18px] w-[17px]" fill="none" stroke="#222" strokeWidth="1.500" strokeLinejoin="round">
            <path d="M8.500 1C5 1 3 3.500 3 6.500V10l-2 4.200h15L14 10V6.500C14 3.500 12 1 8.500 1zM6.500 14.500c0 3 4 3 4 0" />
          </svg>
        </button>
      </div>
    </footer>
  );
}

export default function App() {
  return (
    <div className="flex min-h-screen flex-col font-['Open_Sans','Noto_Sans',sans-serif]">
      <header>
        <TabStrip />
        <Toolbar />
      </header>
      <Page />
      <Taskbar />
    </div>
  );
}
